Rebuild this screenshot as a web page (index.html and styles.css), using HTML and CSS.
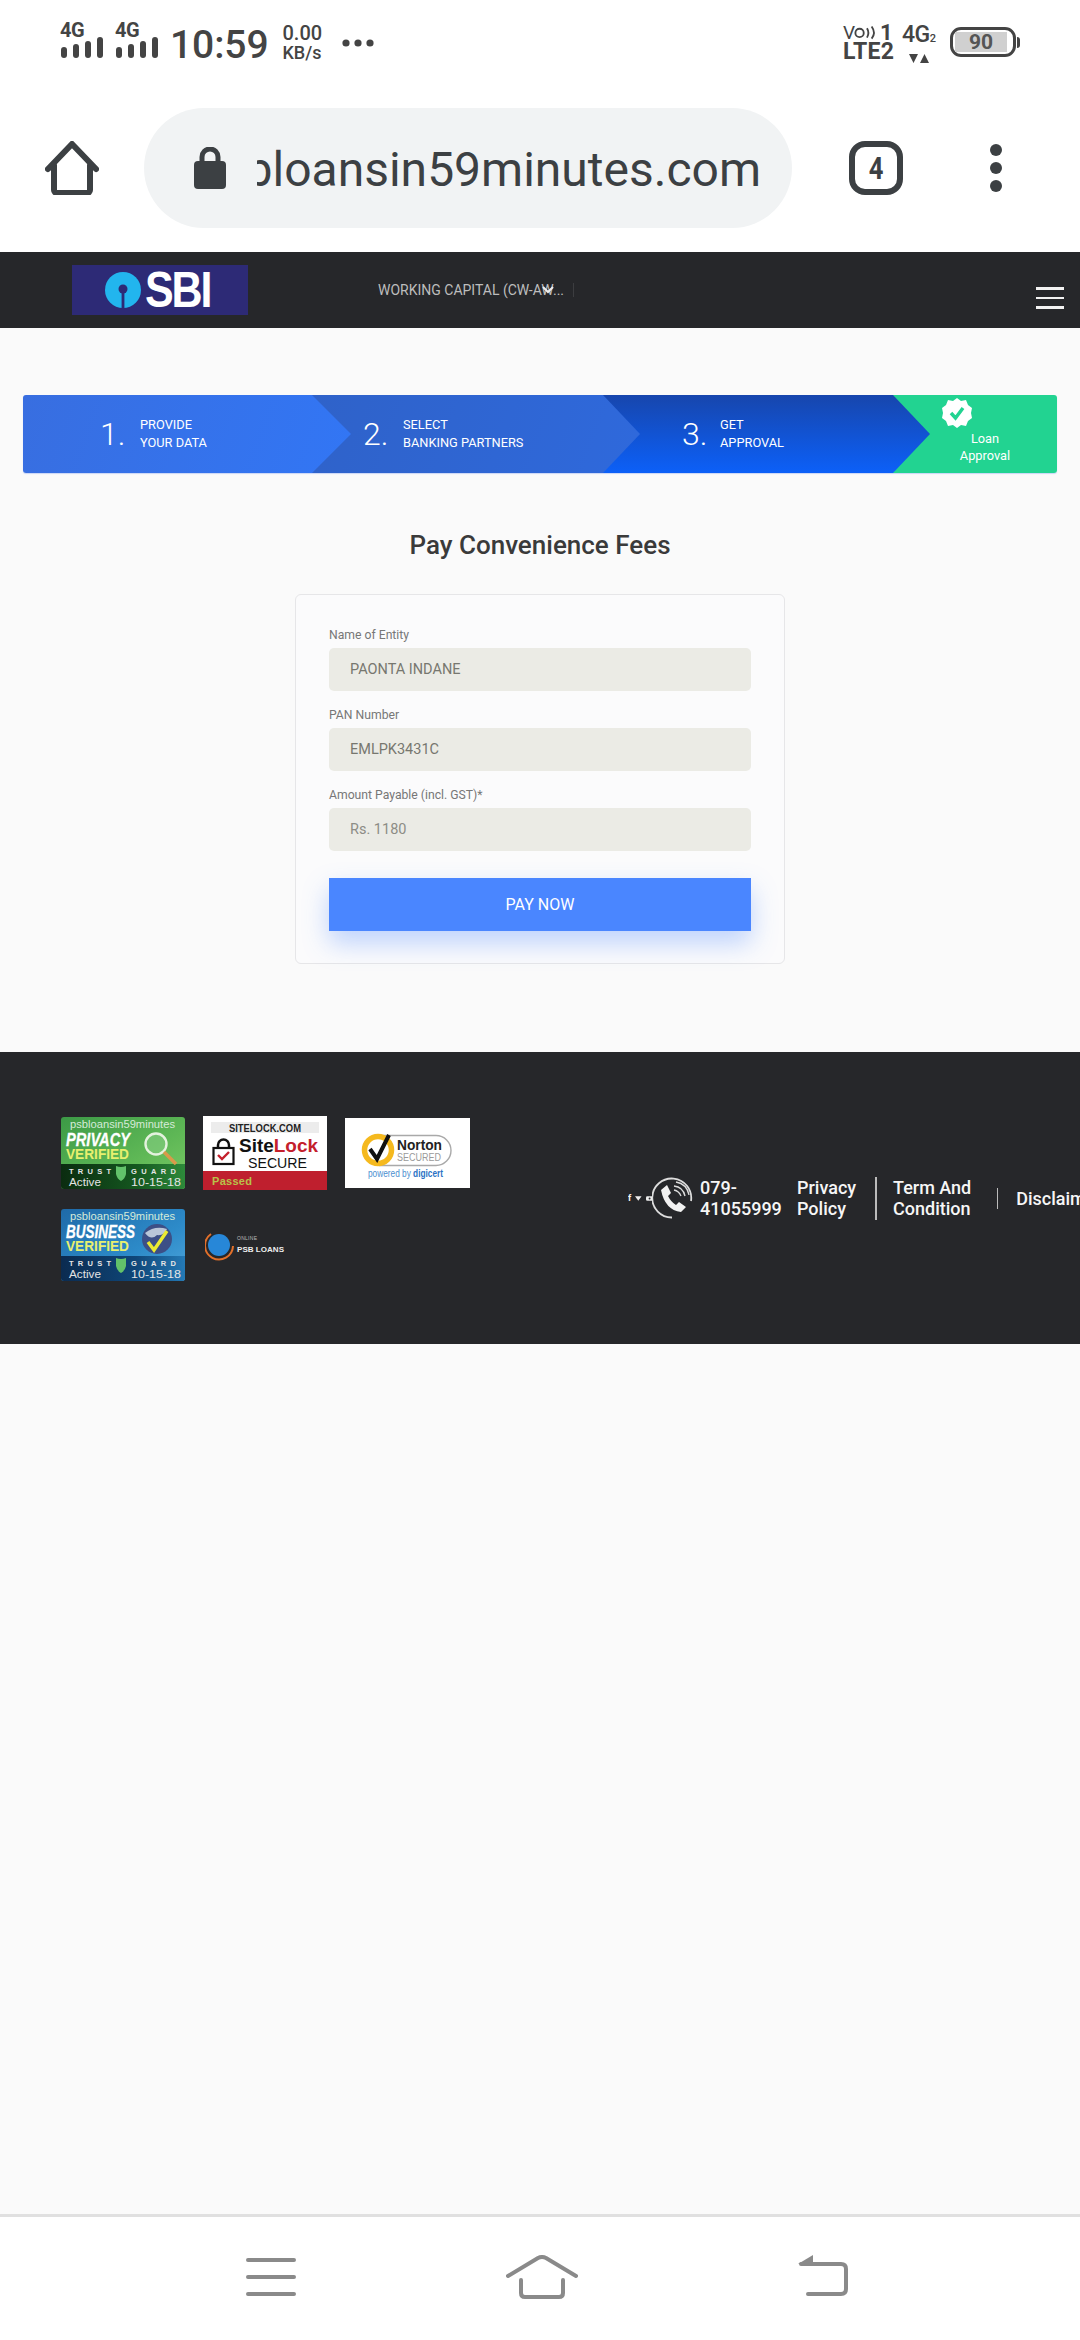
FILE: index.html
```html
<!DOCTYPE html>
<html lang="en">
<head>
<meta charset="utf-8">
<title>Pay Convenience Fees</title>
<link rel="stylesheet" href="styles.css">
</head>
<body>
<div class="phone">
  <div class="status">
    <div class="sim"><span class="sim-label">4G</span>
      <svg class="bars" width="44" height="21" viewBox="0 0 44 21"><rect x="1" y="10" width="6" height="11" rx="3"/><rect x="13" y="7" width="6" height="14" rx="3"/><rect x="25" y="4" width="6" height="17" rx="3"/><rect x="37" y="0" width="6" height="21" rx="3"/></svg>
    </div>
    <div class="sim sim2"><span class="sim-label">4G</span>
      <svg class="bars" width="44" height="21" viewBox="0 0 44 21"><rect x="1" y="10" width="6" height="11" rx="3"/><rect x="13" y="7" width="6" height="14" rx="3"/><rect x="25" y="4" width="6" height="17" rx="3"/><rect x="37" y="0" width="6" height="21" rx="3"/></svg>
    </div>
    <span class="time">10:59</span>
    <div class="speed"><span>0.00</span><span class="speed-unit">KB/s</span></div>
    <svg class="more" width="32" height="8" viewBox="0 0 32 8"><circle cx="4" cy="4" r="3.6"/><circle cx="16" cy="4" r="3.6"/><circle cx="28" cy="4" r="3.6"/></svg>
    <div class="status-right">
      <div class="volte">
        <div class="vo-row"><span class="vo">V</span><svg width="26" height="15" viewBox="0 0 28 15" class="vo-waves"><circle cx="6" cy="8" r="4.5"/><path d="M14 3q3 5 0 10M19 1q5 7 0 13"/></svg><span class="vo-num">1</span></div>
        <div class="lte">LTE2</div>
      </div>
      <div class="net">
        <div class="net-label">4G<span class="net-sub">2</span></div>
        <svg width="20" height="9" viewBox="0 0 20 9" class="net-arrows"><path d="M0 0h9l-4.5 9zM11 9h9l-4.5-9z"/></svg>
      </div>
      <div class="battery"><div class="battery-body"><span class="battery-level">90</span></div><span class="battery-nub"></span></div>
    </div>
  </div>

  <div class="toolbar">
    <svg class="tb-home" width="54" height="54" viewBox="0 0 54 54"><path d="M3 28L27 3l24 25M9 24v25a3 3 0 0 0 3 3h30a3 3 0 0 0 3-3V24"/></svg>
    <div class="pill">
      <svg class="lock" width="32" height="42" viewBox="0 0 32 42"><path class="lock-body" d="M4 14h24a4 4 0 0 1 4 4v20a4 4 0 0 1-4 4H4a4 4 0 0 1-4-4V18a4 4 0 0 1 4-4z"/><path class="lock-arc" d="M8 16V10a8 8 0 0 1 16 0v6"/></svg>
      <div class="url"><span>psbloansin59minutes.com</span></div>
    </div>
    <div class="tabs"><span class="tabs-num">4</span></div>
    <svg class="tb-menu" width="12" height="48" viewBox="0 0 12 48"><circle cx="6" cy="6" r="6"/><circle cx="6" cy="24" r="6"/><circle cx="6" cy="42" r="6"/></svg>
  </div>

  <header class="site-header">
    <div class="logo">
      <svg width="36" height="36" viewBox="0 0 36 36"><circle cx="18" cy="18" r="18" fill="#22b5ee"/><circle cx="18" cy="17" r="4.5" fill="#2d2a76"/><rect x="16.6" y="18" width="2.8" height="18" fill="#2d2a76"/></svg>
      <span class="logo-text">SBI</span>
    </div>
    <div class="loan-select"><span>WORKING CAPITAL (CW-AW...</span>
      <svg class="select-chevron" width="12" height="8" viewBox="0 0 12 8"><path d="M1 1l5 5 5-5"/></svg>
    </div>
    <span class="select-divider"></span>
    <div class="burger"><i></i><i></i><i></i></div>
  </header>

  <main class="page">
    <div class="stepper">
      <div class="step step1"><span class="step-num">1.</span><span class="step-text">PROVIDE<br>YOUR DATA</span></div>
      <div class="step step2"><span class="step-num">2.</span><span class="step-text">SELECT<br>BANKING PARTNERS</span></div>
      <div class="step step3"><span class="step-num">3.</span><span class="step-text">GET<br>APPROVAL</span></div>
      <div class="step step4">
        <svg class="step-badge" width="30" height="30" viewBox="0 0 30 30"><path fill="#fff" d="M15 0l4 3 5-1 2 5 4 3-1 5 1 5-4 3-2 5-5-1-4 3-4-3-5 1-2-5-4-3 1-5-1-5 4-3 2-5 5 1z"/><path fill="none" stroke="#22d391" stroke-width="3.4" d="M9 15l4.500 5L21 10"/></svg>
        <span class="step-end-text">Loan<br>Approval</span>
      </div>
    </div>

    <h1 class="title">Pay Convenience Fees</h1>

    <form class="card">
      <div class="field"><label class="field-label">Name of Entity</label><div class="field-input">PAONTA INDANE</div></div>
      <div class="field"><label class="field-label">PAN Number</label><div class="field-input">EMLPK3431C</div></div>
      <div class="field"><label class="field-label">Amount Payable (incl. GST)*</label><div class="field-input field-soft">Rs. 1180</div></div>
      <button class="pay" type="button">PAY NOW</button>
    </form>

    <footer class="footer">
      <div class="seals">
        <svg class="seal seal-privacy" width="124" height="72" viewBox="0 0 124 72">
          <defs>
            <linearGradient id="gp" x1="0" y1="0" x2="1" y2="1"><stop offset="0" stop-color="#3c9a46"/><stop offset=".6" stop-color="#5fb856"/><stop offset="1" stop-color="#7ccb66"/></linearGradient>
            <linearGradient id="gpb" x1="0" y1="0" x2="1" y2="0"><stop offset="0" stop-color="#0b2c10"/><stop offset=".6" stop-color="#14561f"/><stop offset="1" stop-color="#2d8a3a"/></linearGradient>
          </defs>
          <rect width="124" height="72" rx="3" fill="url(#gp)"/>
          <path d="M0 47h124v22a3 3 0 0 1-3 3H3a3 3 0 0 1-3-3z" fill="url(#gpb)"/>
          <text x="9" y="11" class="s-host" textLength="105" lengthAdjust="spacingAndGlyphs">psbloansin59minutes</text>
          <text x="5" y="29" class="s-head" textLength="64" lengthAdjust="spacingAndGlyphs">PRIVACY</text>
          <text x="5" y="42" class="s-ver" textLength="63" lengthAdjust="spacingAndGlyphs">VERIFIED</text>
          <circle cx="95" cy="27" r="10.500" fill="#8cd28a" fill-opacity=".5" stroke="#e4f2de" stroke-width="2.4"/>
          <path d="M103 35l12 12" stroke="#d99a4a" stroke-width="3.500"/>
          <text x="8" y="57" class="s-tg" textLength="42">TRUST</text>
          <path d="M55 49q5 2 10 0v8q-1 5-5 7q-4-2-5-7z" fill="#62c26a"/>
          <text x="70" y="57" class="s-tg" textLength="45">GUARD</text>
          <text x="8" y="69" class="s-date" textLength="32" lengthAdjust="spacingAndGlyphs">Active</text>
          <text x="70" y="69" class="s-date" textLength="50" lengthAdjust="spacingAndGlyphs">10-15-18</text>
        </svg>
        <svg class="seal seal-sitelock" width="124" height="74" viewBox="0 0 124 74">
          <rect width="124" height="74" fill="#fff"/>
          <rect x="8" y="6" width="108" height="11" fill="#ececec"/>
          <text x="26" y="15.500" class="s-sl-top" textLength="72" lengthAdjust="spacingAndGlyphs">SITELOCK.COM</text>
          <path d="M15 32v-3a5.500 5.500 0 0 1 11 0v3" fill="none" stroke="#111" stroke-width="2.500"/>
          <rect x="10.500" y="32" width="20" height="16" fill="#fff" stroke="#111" stroke-width="2.200"/>
          <path d="M15 39l4 4 7-7" fill="none" stroke="#c4202c" stroke-width="2.400"/>
          <text x="36" y="36" class="s-sl-name" textLength="79" lengthAdjust="spacingAndGlyphs"><tspan>Site</tspan><tspan class="s-sl-red">Lock</tspan></text>
          <text x="45" y="52" class="s-sl-sec" textLength="59" lengthAdjust="spacingAndGlyphs">SECURE</text>
          <rect y="55" width="124" height="19" fill="#bf1f2e"/>
          <text x="9" y="69" class="s-sl-pass" textLength="40">Passed</text>
        </svg>
        <svg class="seal seal-norton" width="125" height="70" viewBox="0 0 125 70">
          <rect width="125" height="70" fill="#fff"/>
          <path d="M34 17.500h57a15 15 0 0 1 0 30H34" fill="none" stroke="#a9a9a9" stroke-width="1.400"/>
          <circle cx="33" cy="32" r="13.500" fill="#fff" stroke="#f5b91e" stroke-width="5.500"/>
          <path d="M25 31l7 10 12-24" fill="none" stroke="#111" stroke-width="4"/>
          <text x="52" y="32" class="s-n-name" textLength="45" lengthAdjust="spacingAndGlyphs">Norton</text>
          <text x="52" y="43" class="s-n-sec" textLength="44" lengthAdjust="spacingAndGlyphs">SECURED</text>
          <text x="23" y="59" class="s-n-pow" textLength="75" lengthAdjust="spacingAndGlyphs"><tspan>powered by </tspan><tspan class="s-n-dig">digicert</tspan></text>
        </svg>
        <svg class="seal seal-business" width="124" height="72" viewBox="0 0 124 72">
          <defs>
            <linearGradient id="gb" x1="0" y1="0" x2="1" y2="1"><stop offset="0" stop-color="#1f6aa8"/><stop offset=".6" stop-color="#2d8bc9"/><stop offset="1" stop-color="#4fa6dc"/></linearGradient>
            <linearGradient id="gbb" x1="0" y1="0" x2="1" y2="0"><stop offset="0" stop-color="#0b2b50"/><stop offset=".6" stop-color="#0f4678"/><stop offset="1" stop-color="#2479b5"/></linearGradient>
          </defs>
          <rect width="124" height="72" rx="3" fill="url(#gb)"/>
          <path d="M0 47h124v22a3 3 0 0 1-3 3H3a3 3 0 0 1-3-3z" fill="url(#gbb)"/>
          <text x="9" y="11" class="s-host" textLength="105" lengthAdjust="spacingAndGlyphs">psbloansin59minutes</text>
          <text x="5" y="29" class="s-head" textLength="69" lengthAdjust="spacingAndGlyphs">BUSINESS</text>
          <text x="5" y="42" class="s-ver" textLength="63" lengthAdjust="spacingAndGlyphs">VERIFIED</text>
          <circle cx="96" cy="30" r="15" fill="#3c4f86"/>
          <path d="M84 24q10-8 22-4q-3 7-10 6q-6 6-12-2z" fill="#b9c6d8"/>
          <path d="M87 33l6 8 13-19" fill="none" stroke="#eaea32" stroke-width="3.400"/>
          <text x="8" y="57" class="s-tg" textLength="42">TRUST</text>
          <path d="M55 49q5 2 10 0v8q-1 5-5 7q-4-2-5-7z" fill="#62c26a"/>
          <text x="70" y="57" class="s-tg" textLength="45">GUARD</text>
          <text x="8" y="69" class="s-date" textLength="32" lengthAdjust="spacingAndGlyphs">Active</text>
          <text x="70" y="69" class="s-date" textLength="50" lengthAdjust="spacingAndGlyphs">10-15-18</text>
        </svg>
        <svg class="seal seal-psb" width="82" height="34" viewBox="0 0 82 34">
          <circle cx="14" cy="17" r="11" fill="#2787d8"/>
          <path d="M6 6a14 14 0 1 0 22 12" fill="none" stroke="#e2702a" stroke-width="2"/>
          <text x="32" y="12" class="s-psb-on" textLength="20">ONLINE</text>
          <text x="32" y="24" class="s-psb-name" textLength="47">PSB LOANS</text>
        </svg>
      </div>
      <div class="contact">
        <div class="social"><span class="social-f">f</span><svg width="10" height="7" viewBox="0 0 10 7"><path fill="#eee" d="M0 0h10L5 7z"/></svg><svg width="11" height="7" viewBox="0 0 11 7"><rect width="11" height="7" rx="2" fill="#eee"/><circle cx="5.500" cy="3.500" r="1.500" fill="#26272a"/></svg></div>
        <svg class="phone-icon" width="42" height="42" viewBox="0 0 42 42"><path class="ph-ring" d="M20 40.500A19.500 19.500 0 1 1 39 24"/><path class="ph-hand" d="M9 13l6-5 4 8-3 3q3 6 8 9l3-3 7 5-5 5Q13 33 9 13z"/><path class="ph-wave" d="M22 9q9 1 11 10M22 13q5 1 7 6M24 5q11 2 13 13"/></svg>
        <div class="phone-num">079-<br>41055999</div>
        <a class="flink link-privacy">Privacy<br>Policy</a>
        <span class="sep sep-tall"></span>
        <a class="flink">Term And<br>Condition</a>
        <span class="sep"></span>
        <a class="flink flink-last">Disclaimer</a>
      </div>
    </footer>
  </main>

  <nav class="navbar">
    <svg class="nav-menu" width="50" height="38" viewBox="0 0 50 38"><path d="M2 2h46M2 19h46M2 36h46"/></svg>
    <svg class="nav-home" width="72" height="44" viewBox="0 0 72 44"><path d="M2 21L32 3q4-2 8 0l30 18M15 25v13q0 4 4 4h34q4 0 4-4V25"/></svg>
    <svg class="nav-back" width="50" height="41" viewBox="0 0 50 41"><path class="nav-back-line" d="M3 9h40q5 0 5 5v20q0 5-5 5H10"/><path class="nav-back-head" d="M0 9L15 0v9z"/></svg>
  </nav>
</div>
</body>
</html>
```
FILE: styles.css
```css
* { box-sizing: border-box; }
html, body { margin: 0; padding: 0; }
body { font-family: Roboto, "Liberation Sans", sans-serif; background: #fff; }
.phone { width: 1080px; height: 2340px; display: flex; flex-direction: column; overflow: hidden; background: #fff; }

/* status bar */
.status { height: 100px; flex: none; display: flex; align-items: flex-start; padding: 23px 0 0 60px; color: #444; }
.sim { width: 44px; display: flex; flex-direction: column; }
.sim2 { margin-left: 11px; }
.sim-label { font-size: 20px; font-weight: 700; line-height: 14px; height: 14px; letter-spacing: -.5px; }
.bars { display: block; fill: #444; }
.time { margin-left: 11px; font-size: 39px; font-weight: 500; line-height: 44px; letter-spacing: -.1px; }
.speed { margin-left: 14px; display: flex; flex-direction: column; font-size: 20px; font-weight: 500; line-height: 20px; }
.speed-unit { font-size: 18px; }
.more { margin: 16px 0 0 20px; fill: #444; }
.status-right { margin-left: auto; display: flex; align-items: flex-start; padding-right: 60px; }
.volte { width: 56px; display: flex; flex-direction: column; }
.vo-row { display: flex; align-items: center; height: 17px; margin-top: 1px; font-weight: 500; }
.vo { font-size: 19px; line-height: 17px; font-weight: 400; }
.vo-waves { fill: none; stroke: #444; stroke-width: 2; margin-left: -1px; }
.vo-num { font-size: 22px; font-weight: 700; line-height: 17px; }
.lte { font-size: 23px; font-weight: 700; line-height: 20px; margin-top: 1px; letter-spacing: .2px; }
.net { margin-left: 3px; width: 41px; display: flex; flex-direction: column; align-items: flex-start; margin-top: 1px; }
.net-label { font-size: 23px; font-weight: 500; line-height: 22px; white-space: nowrap; letter-spacing: -.5px; }
.net-sub { font-size: 11px; font-weight: 500; }
.net-arrows { fill: #444; margin: 4px 0 0 7px; }
.battery { margin-left: 7px; margin-top: 4px; display: flex; align-items: center; }
.battery-body { width: 66px; height: 30px; border: 3px solid #444; border-radius: 11px; padding: 2px 0 2px 2px; display: flex; }
.battery-level { width: 52px; background: #d0d0d0; font-size: 21px; font-weight: 700; line-height: 20px; text-align: center; color: #555; }
.battery-nub { width: 3px; height: 11px; background: #444; border-radius: 0 3px 3px 0; margin-left: 1px; }

/* browser toolbar */
.toolbar { height: 152px; flex: none; display: flex; align-items: center; padding: 0 0 16px 45px; }
.tb-home { fill: none; stroke: #3c4043; stroke-width: 6; stroke-linecap: round; stroke-linejoin: round; flex: none; }
.pill { width: 648px; height: 120px; margin-left: 45px; border-radius: 60px; background: #f1f3f4; display: flex; align-items: center; padding-left: 50px; flex: none; }
.lock { flex: none; }
.lock-body { fill: #3c4043; }
.lock-arc { fill: none; stroke: #3c4043; stroke-width: 5; }
.url { margin: 3px 0 0 31px; width: 504px; overflow: hidden; display: flex; justify-content: flex-end; font-size: 48px; line-height: 56px; color: #3c4043; white-space: nowrap; flex: none; }
.tabs { width: 54px; height: 54px; margin-left: 57px; border: 6px solid #3c4043; border-radius: 16px; display: flex; align-items: center; justify-content: center; font-size: 32px; font-weight: 700; color: #3c4043; flex: none; }
.tabs-num { display: block; transform: scaleX(.8); }
.tb-menu { margin-left: 87px; fill: #3c4043; flex: none; }

/* site header */
.site-header { height: 76px; flex: none; background: #26272a; display: flex; align-items: center; padding-left: 72px; }
.logo { width: 176px; height: 50px; background: #2d2a76; display: flex; align-items: center; padding-left: 33px; flex: none; }
.logo-text { margin-left: 4px; color: #fff; font-size: 50px; font-weight: 700; line-height: 50px; letter-spacing: -2.500px; font-family: "Liberation Sans", sans-serif; transform-origin: left center; transform: scaleX(.86); }
.loan-select { margin-left: 130px; width: 195px; display: flex; align-items: center; font-size: 14px; color: #bdbdbd; white-space: nowrap; }
.select-chevron { margin-left: -22px; fill: none; stroke: #eee; stroke-width: 2; }
.select-divider { width: 1px; height: 14px; background: #3c3d40; }
.burger { margin: 16px 16px 0 auto; width: 28px; display: flex; flex-direction: column; gap: 7px; }
.burger i { display: block; height: 2.500px; background: #f2f2f2; }

/* page */
.page { flex: 1; min-height: 0; background: #fafafa; display: flex; flex-direction: column; }
.stepper { margin: 67px 23px 0; height: 78px; display: flex; border-radius: 3px; overflow: hidden; flex: none; color: #fff; box-shadow: 0 1px 1px rgba(90,130,240,.3); }
.step { height: 78px; display: flex; align-items: center; position: relative; flex: none; }
.step1 { clip-path: polygon(0 0, calc(100% - 39px) 0, 100% 50%, calc(100% - 39px) 100%, 0 100%); }
.step2, .step3 { clip-path: polygon(0 0, calc(100% - 37px) 0, 100% 50%, calc(100% - 37px) 100%, 0 100%); }
.step1 { width: 328px; z-index: 3; padding-left: 77px; background: linear-gradient(110deg, #386ee0, #3276f5); }
.step2 { width: 328px; z-index: 2; margin-left: -39px; padding-left: 51px; background: linear-gradient(110deg, #2f62c9, #2f69dc); }
.step3 { width: 327px; z-index: 1; margin-left: -37px; padding-left: 79px; background: linear-gradient(180deg, #1746ad, #0c60f8); }
.step4 { flex: 1; margin-left: -37px; background: #22d391; flex-direction: column; align-items: flex-start; padding: 3px 0 0 49px; }
.step-num { width: 40px; font-size: 32px; font-weight: 300; line-height: 40px; flex: none; }
.step3 .step-num { width: 38px; }
.step-text { font-size: 12.800px; line-height: 18px; white-space: nowrap; }
.step-badge { display: block; flex: none; }
.step-end-text { font-size: 12.800px; line-height: 17px; text-align: center; width: 70px; margin: 2px 0 0 8px; }

.title { margin: 52px 0 29px; font-size: 26px; font-weight: 500; line-height: 40px; text-align: center; color: #3a3a3a; flex: none; }
.card { width: 490px; height: 370px; margin: 0 auto; padding: 30px 33px 32px; background: #fbfbfc; border: 1px solid #e6e6e8; border-radius: 6px; display: flex; flex-direction: column; gap: 14px; flex: none; }
.field { display: flex; flex-direction: column; gap: 5px; }
.field-label { display: block; font-size: 12.200px; line-height: 20px; height: 18px; color: #777; }
.field-input { height: 43px; background: #ebebe5; border-radius: 5px; padding: 0 21px; font-size: 14.500px; line-height: 43px; color: #77776f; }
.field-soft { color: #8d8d86; }
.pay { height: 53px; margin-top: 13px; border: 0; background: #4a86ff; color: #fff; font: 400 16px/53px Roboto, sans-serif; box-shadow: 0 12px 26px rgba(74,134,255,.35); padding: 0; }

/* footer */
.footer { height: 292px; margin-top: 88px; background: #26272a; display: flex; align-items: center; flex: none; padding-left: 61px; color: #fff; }
.seals { width: 420px; height: 164px; flex: none; display: grid; grid-template-columns: 124px 124px 125px; grid-template-rows: 74px 74px; column-gap: 18px; row-gap: 18px; align-items: center; }
.seal { display: block; }
.seal-psb { margin-left: 2px; align-self: center; }
.contact { margin-left: 147px; display: flex; align-items: center; flex: none; white-space: nowrap; font-weight: 500; font-size: 18px; line-height: 21px; color: #f6f6f6; }
.social { display: flex; align-items: center; gap: 4px; width: 25px; flex: none; overflow: hidden; }
.social-f { font-size: 9px; line-height: 9px; font-weight: 700; }
.phone-icon { margin-left: -1px; flex: none; }
.ph-ring { fill: none; stroke: #ddd; stroke-width: 1.800; }
.ph-hand { fill: #f2f2f2; }
.ph-wave { fill: none; stroke: #ddd; stroke-width: 1.300; }
.phone-num { margin-left: 6px; width: 97px; flex: none; }
.flink { display: block; flex: none; }
.link-privacy { width: 78px; }
.sep { width: 1px; height: 21px; background: #bbb; flex: none; margin: 0 18px 0 26px; }
.sep-tall { height: 43px; width: 2px; margin: 0 16px 0 0; }
.flink-last { margin-left: 0; }

/* nav */
.navbar { height: 126px; flex: none; background: #fff; border-top: 3px solid #e0e0e0; display: flex; align-items: flex-start; padding: 35px 0 0 246px; }
.nav-menu { flex: none; margin-top: 6px; fill: none; stroke: #8a8a8a; stroke-width: 4; stroke-linecap: round; }
.nav-home { flex: none; margin: 3px 0 0 210px; fill: none; stroke: #8a8a8a; stroke-width: 4; stroke-linecap: round; stroke-linejoin: round; }
.nav-back { flex: none; margin: 3px 0 0 220px; }
.nav-back-line { fill: none; stroke: #8a8a8a; stroke-width: 4; stroke-linecap: round; }
.nav-back-head { fill: #8a8a8a; }

/* seal text */
.seal text { font-family: "Liberation Sans", sans-serif; }
.s-host { font-size: 10.500px; fill: #d6ead8; }
.s-head { font-size: 18px; font-weight: 700; font-style: italic; fill: #fff; stroke: #fff; stroke-width: .3px; }
.s-ver { font-size: 14px; font-weight: 700; fill: #e8f06e; }
.s-tg { font-size: 7.500px; font-weight: 700; fill: #e6e6e6; }
.s-date { font-size: 11.500px; fill: #e4e4e4; }
.s-sl-top { font-size: 10px; font-weight: 700; fill: #222; }
.s-sl-name { font-size: 19px; font-weight: 700; fill: #111; }
.s-sl-red { fill: #c4202c; }
.s-sl-sec { font-size: 14px; font-weight: 400; fill: #111; }
.s-sl-pass { font-size: 11px; font-weight: 700; fill: #b8c24a; }
.s-n-name { font-size: 15px; font-weight: 700; fill: #222; }
.s-n-sec { font-size: 10px; fill: #9a9a9a; }
.s-n-pow { font-size: 10px; fill: #4c8fd0; }
.s-n-dig { font-weight: 700; fill: #2a72c4; }
.s-psb-on { font-size: 5px; fill: #bbb; }
.s-psb-name { font-size: 8px; font-weight: 700; fill: #eee; }
```
